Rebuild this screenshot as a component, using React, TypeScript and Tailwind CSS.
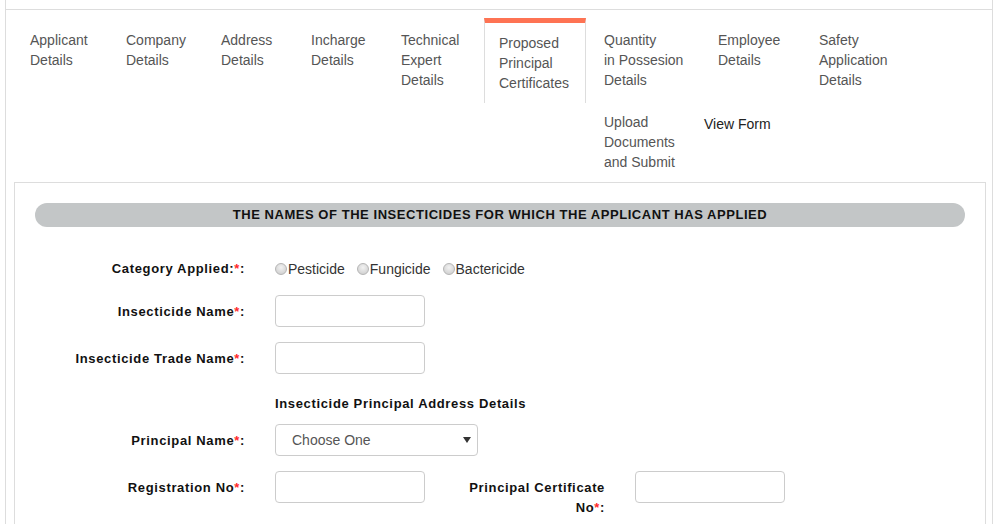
const tabs = [
  { lines: ['Applicant', 'Details'], w: 'w-[96px]' },
  { lines: ['Company', 'Details'], w: 'w-[95px]' },
  { lines: ['Address', 'Details'], w: 'w-[90px]' },
  { lines: ['Incharge', 'Details'], w: 'w-[90px]' },
  { lines: ['Technical', 'Expert', 'Details'], w: 'w-[99px]' },
]

const tabsAfter = [
  { lines: ['Quantity', 'in Possesion', 'Details'], w: 'w-[114px]' },
  { lines: ['Employee', 'Details'], w: 'w-[101px]' },
  { lines: ['Safety', 'Application', 'Details'], w: 'w-[112px]' },
]

function Tab({ lines, w }: { lines: string[]; w: string }) {
  return (
    <div className={`${w} shrink-0 border-t-[5px] border-t-transparent px-[16px] pt-[7px] pb-[10px] text-[14px] leading-[20px] text-[#555]`}>
      {lines.map((l) => (
        <div key={l} className="whitespace-nowrap">{l}</div>
      ))}
    </div>
  )
}

function Req({ children }: { children: React.ReactNode }) {
  return (
    <>
      {children}
      <span className="text-[#ff2a2a]">*</span>:
    </>
  )
}

function Label({ children }: { children: React.ReactNode }) {
  return (
    <div className="w-[210px] shrink-0 pt-[7px] text-right text-[13px] leading-[20px] font-bold tracking-[0.65px] text-[#111]">
      {children}
    </div>
  )
}

function TextBox() {
  return <div className="ml-[30px] h-[32px] w-[150px] shrink-0 rounded-[4px] border border-[#ccc] bg-white" />
}

function Radio({ label }: { label: string }) {
  return (
    <span className="flex items-center">
      <span className="mr-[1px] h-[12px] w-[12px] rounded-full border border-[#b5b5b5] bg-[radial-gradient(circle_at_50%_35%,#f2f2f2,#c9c9c9)]" />
      <span>{label}</span>
    </span>
  )
}

export default function App() {
  return (
    <div className="h-[524px] w-[1000px] overflow-hidden bg-white font-['Liberation_Sans',Arial,sans-serif]">
      <div className="ml-[5px] h-[524px] w-[988px] border-x border-[#ddd]">
        <div className="h-[10px] border-b border-[#ddd]" />

        {/* tabs */}
        <div className="pl-[8px] pt-[8px]">
          <div className="flex items-start">
            {tabs.map((t) => (
              <Tab key={t.lines[0]} {...t} />
            ))}
            <div className="mr-[2px] w-[102px] shrink-0 border-x border-t-[5px] border-x-[#ddd] border-t-[#fe7353] pl-[14px] pt-[10px] pb-[10px] text-[14px] leading-[20px] text-[#555]">
              <div>Proposed</div>
              <div>Principal</div>
              <div>Certificates</div>
            </div>
            {tabsAfter.map((t) => (
              <Tab key={t.lines[0]} {...t} />
            ))}
          </div>
          <div className="flex items-start pl-[574px]">
            <div className="w-[100px] shrink-0 whitespace-nowrap px-[16px] pt-[9px] pb-[10px] text-[14px] leading-[20px] text-[#555]">
              <div>Upload</div>
              <div>Documents</div>
              <div>and Submit</div>
            </div>
            <div className="px-[16px] pt-[11px] text-[14px] leading-[20px] text-[#222]">View Form</div>
          </div>

          {/* panel */}
          <div className="h-[400px] w-[972px] border border-[#ddd] px-[20px] pt-[20px]">
            <div className="flex h-[24px] items-center justify-center rounded-full bg-[#c3c6c7] text-[13px] font-bold tracking-[0.55px] text-[#111]">
              THE NAMES OF THE INSECTICIDES FOR WHICH THE APPLICANT HAS APPLIED
            </div>

            <div className="mt-[25px] flex items-start">
              <Label>
                <Req>Category Applied:</Req>
              </Label>
              <div className="ml-[30px] flex items-center gap-[12px] pt-[7px] text-[14px] leading-[20px] text-[#333]">
                <Radio label="Pesticide" />
                <Radio label="Fungicide" />
                <Radio label="Bactericide" />
              </div>
            </div>

            <div className="mt-[16px] flex items-start">
              <Label>
                <Req>Insecticide Name</Req>
              </Label>
              <TextBox />
            </div>

            <div className="mt-[15px] flex items-start">
              <Label>
                <Req>Insecticide Trade Name</Req>
              </Label>
              <TextBox />
            </div>

            <div className="mt-[20px] pl-[240px] text-[13px] leading-[20px] font-bold tracking-[0.65px] text-[#111]">
              Insecticide Principal Address Details
            </div>

            <div className="mt-[10px] flex items-start">
              <Label>
                <Req>Principal Name</Req>
              </Label>
              <div className="ml-[30px] flex h-[32px] w-[203px] items-center justify-between rounded-[4px] border border-[#ccc] bg-white pl-[16px] pr-[6px] text-[14px] text-[#555]">
                <span>Choose One</span>
                <svg width="8" height="6" viewBox="0 0 8 6">
                  <path d="M0 0h8L4 6z" fill="#333" />
                </svg>
              </div>
            </div>

            <div className="mt-[15px] flex items-start">
              <Label>
                <Req>Registration No</Req>
              </Label>
              <TextBox />
              <div className="ml-[30px] w-[150px] shrink-0 pt-[7px] text-right text-[13px] leading-[20px] font-bold tracking-[0.65px] text-[#111]">
                Principal Certificate
                <br />
                <Req>No</Req>
              </div>
              <TextBox />
            </div>
          </div>
        </div>
      </div>
    </div>
  )
}
